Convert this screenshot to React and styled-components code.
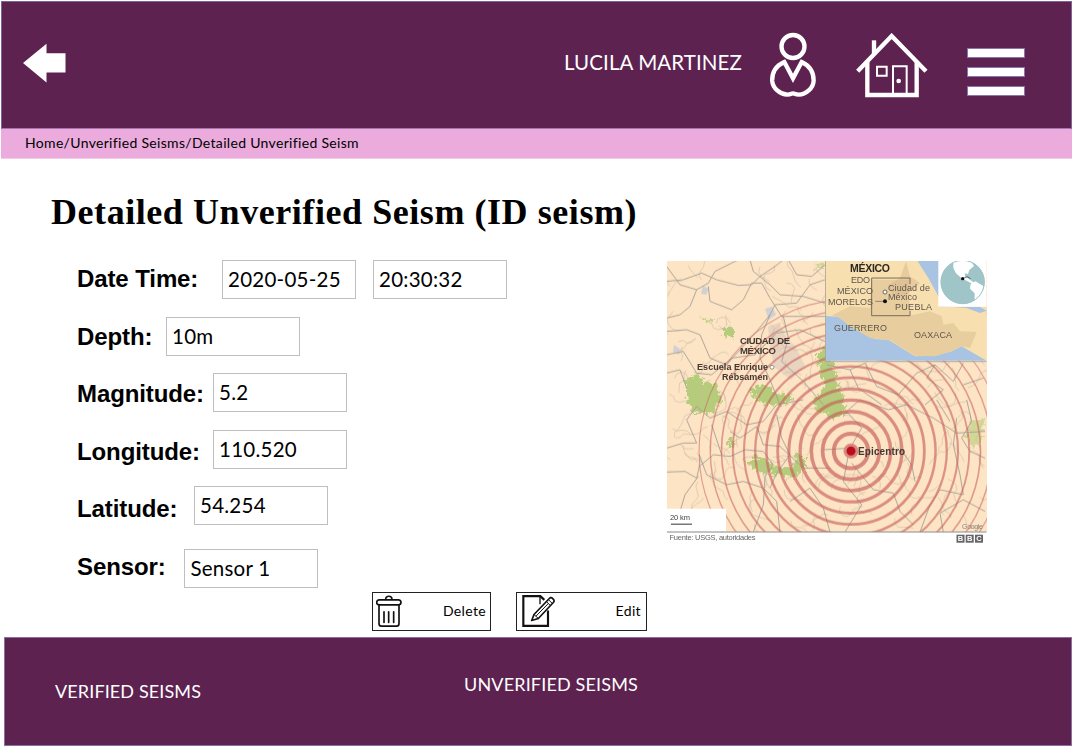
import React from "react";
import styled, { createGlobalStyle } from "styled-components";

const GlobalStyle = createGlobalStyle`
  *, *::before, *::after { box-sizing: border-box; }
  body { margin: 0; background: #fff; color: #000; font-family: Lato, "Liberation Sans", sans-serif; }
  svg { display: block; flex: none; }
`;

const Page = styled.div`
  width: 1073px;
  height: 747px;
  padding: 1px 1px 1px;
  display: flex;
  flex-direction: column;
  overflow: hidden;
`;

const Header = styled.header`
  height: 128px;
  flex: none;
  display: flex;
  align-items: flex-start;
  background: #5d2250;
  border: 1px solid #7d6499;
  border-bottom-color: #a774ae;
`;

const IconButton = styled.button`
  border: 0;
  padding: 0;
  background: none;
  flex: none;
  margin: ${(p) => p.$top}px 0 0 ${(p) => p.$left}px;
`;

const UserName = styled.span`
  margin: 47px 0 0 auto;
  width: 178px;
  font-size: 20.5px;
  line-height: 26px;
  letter-spacing: ${(p) => p.$spacing}px;
  color: #fff;
  white-space: nowrap;
`;

const MenuButton = styled.button`
  width: 58px;
  margin: 46px 46px 0 39px;
  padding: 0;
  border: 0;
  background: none;
  display: flex;
  flex-direction: column;
  gap: 9px;
`;

const MenuBar = styled.span`
  height: 10px;
  background: #fff;
  border: 1px solid #8b74ab;
`;

const Breadcrumb = styled.nav`
  height: 30px;
  flex: none;
  padding-left: 24px;
  background: #ebabdd;
  border-bottom: 1px solid #f1cbe8;
  font-size: 14px;
  line-height: 28px;
  letter-spacing: 0.32px;
  white-space: nowrap;
`;

const Main = styled.main`
  flex: 1;
  min-height: 0;
  display: flex;
  flex-direction: column;
`;

const Title = styled.h1`
  margin: 32px 0 0 50px;
  font: bold 36px/42px "Liberation Serif", serif;
  letter-spacing: 0.56px;
  white-space: nowrap;
`;

const Content = styled.div`
  display: flex;
  height: 332px;
  margin-top: 27px;
  padding-left: 76px;
`;

const Fields = styled.div`
  width: 590px;
  flex: none;
`;

const MapFrame = styled.figure`
  margin: 1px 0 0;
`;

const Row = styled.div`
  height: 57.6px;
  display: flex;
  align-items: flex-start;
`;

const Label = styled.label`
  width: ${(p) => p.$width}px;
  flex: none;
  padding-top: 5px;
  font: bold 24px/28px "Liberation Sans", sans-serif;
  letter-spacing: -0.1px;
  white-space: nowrap;
`;

const Value = styled.div`
  width: 133.500px;
  height: 39px;
  flex: none;
  margin-top: ${(p) => p.$shift || 0}px;
  margin-right: 17.500px;
  padding-left: 5px;
  border: 1px solid #bfbfbf;
  font-size: 20.5px;
  line-height: 37px;
  letter-spacing: 0.25px;
  white-space: nowrap;
`;

const Actions = styled.div`
  display: flex;
  gap: 25px;
  padding-left: 371px;
`;

const ActionButton = styled.button`
  width: ${(p) => p.$width}px;
  height: 39px;
  display: flex;
  align-items: center;
  justify-content: space-between;
  padding: 0 ${(p) => p.$end}px 0 ${(p) => p.$inset}px;
  background: #fff;
  color: #000;
  border: 1px solid #222;
  font: 14px/18px Lato, sans-serif;
  letter-spacing: 0.35px;
`;

const ActionText = styled.span`
  padding-bottom: 2px;
`;

const Footer = styled.footer`
  height: 109px;
  flex: none;
  margin-left: 3px;
  display: flex;
  background: #5d2250;
  border: 1px solid #8b6f9f;
  color: #fff;
  font-size: 18px;
  line-height: 22px;
`;

const FooterLink = styled.span`
  margin-left: ${(p) => p.$left}px;
  margin-top: ${(p) => p.$top}px;
  width: ${(p) => p.$width}px;
  letter-spacing: ${(p) => p.$spacing}px;
  white-space: nowrap;
`;

const BackIcon = () => (
  <svg width="44" height="40" viewBox="0.5 0 44 40">
    <path d="M.5 20 24 .8V10.300H43V29.500H24V39.500Z" fill="#fff" />
  </svg>
);

const UserIcon = () => (
  <svg width="50" height="66" viewBox="654 96 150 198" fill="none" stroke="#fff" strokeWidth="13">
    <circle cx="729" cy="139.500" r="34.500" />
    <path d="M703 186C676 198 666 219 666.500 242C668 265 690 283 712 284C723 284 724 280 729 280C734 280 735 284 746 284C768 283 790 265 791 242C791 219 781 198 755 186L729 235Z" />
  </svg>
);

const HomeIcon = () => (
  <svg width="72" height="66" viewBox="917 98 216 198" fill="none" stroke="#fff">
    <path d="M922 213 1024 107 1127 213" strokeWidth="13" />
    <path d="M971 162V120" strokeWidth="13" />
    <path d="M951 184V284H1099V184" strokeWidth="13" />
    <path d="M980 199H1009V226H980Z" strokeWidth="6" />
    <path d="M1028 281V198H1069V281" strokeWidth="6" />
    <circle cx="1045" cy="242" r="7" fill="#fff" stroke="none" />
  </svg>
);

const TrashIcon = () => (
  <svg width="26" height="33" viewBox="33 45 78 98" fill="none" stroke="#111" strokeWidth="5" strokeLinejoin="round" strokeLinecap="round">
    <path d="M62 58C61 45 81 45 81 58" />
    <path d="M42 59H101Q108 60 108 67Q108 73 101 74H42Q35 73 35 67Q35 60 42 59Z" />
    <path d="M42 75V130Q42 138 49 138H95Q102 138 102 130V75" />
    <path d="M57 95V127M71 95V127M86 95V127" />
  </svg>
);

const EditIcon = () => (
  <svg width="34" height="33" viewBox="470 45 102 98" fill="none" stroke="#111">
    <path d="M537 59 525 48H474V137H548V91" strokeWidth="6.500" />
    <path d="M524 50V72" strokeWidth="4" />
    <path d="M506 103 552 55Q557 50 563 56Q569 62 564 67L519 115L499 121Z" fill="#fff" strokeWidth="5" strokeLinejoin="round" />
    <path d="M506 103 519 115M543 64 555 76M549 58 561 70M512 108 549 70" strokeWidth="3" />
  </svg>
);

const makeRandom = (seed) => () => {
  seed = (seed * 16807) % 2147483647;
  return seed / 2147483647;
};

/* Minor roads: short wandering lines scattered over the map area. */
const random = makeRandom(481);
const minorRoads = Array.from({ length: 190 }, () => {
  let x = random() * 320;
  let y = random() * 270;
  let angle = random() * 6.28;
  let d = `M${x.toFixed(1)} ${y.toFixed(1)}`;
  const steps = 3 + Math.floor(random() * 6);
  for (let i = 0; i < steps; i += 1) {
    angle += (random() - 0.5) * 2;
    x += Math.cos(angle) * 5;
    y += Math.sin(angle) * 5;
    d += `L${x.toFixed(1)} ${y.toFixed(1)}`;
  }
  return d;
}).join("");

const rings = Array.from({ length: 13 }, (_, i) => ({
  r: 17.2 + i * 11.23,
  width: 4 - i * 0.24,
  opacity: 0.68 - i * 0.012,
}));

const THIRD = 1 / 3;
const quarter = (x, y) => `translate(${x} ${y}) scale(${THIRD})`;

const SeismMap = () => (
  <svg width="320" height="284" viewBox="0 0.3 320 284" fontFamily="Liberation Sans, sans-serif">
    <defs>
      <clipPath id="land"><rect width="319.500" height="271" /></clipPath>
      <clipPath id="inset"><rect x="158.500" width="161" height="100" /></clipPath>
      <clipPath id="globe"><circle cx="428" cy="82" r="66" /></clipPath>
      <filter id="soft" x="0" y="0" width="100%" height="100%"><feGaussianBlur stdDeviation="0.45" /></filter>
      <filter id="ragged"><feTurbulence baseFrequency="0.15" numOctaves="3" seed="4" /><feDisplacementMap in="SourceGraphic" scale="12" xChannelSelector="R" yChannelSelector="G" /></filter>
    </defs>
    <g clipPath="url(#land)">
      <g filter="url(#soft)">
        <rect width="320" height="271" fill="#fce4c4" />
        <g fill="#b5cd7a" filter="url(#ragged)">
          <path d="M15 116 29 108 35 120 46 120 51 138 43 150 22 150 17 137Z" />
          <path d="M54 65H64V74H54Z" />
          <path d="M31 55H43V58H31Z" opacity=".7" />
          <path d="M78 127 95 121 107 130 125 132 118 140 98 142 90 138Z" />
          <path d="M146 89 159 82 169 123 178 151 160 155 143 137 155 125Z" />
          <path d="M58 177H65V184H58Z" />
          <path d="M76 198 92 193 103 202 120 205 129 190H136V206L122 214 98 210 83 206Z" />
          <path d="M301 157 314 156 312 181 302 184 297 171Z" opacity=".6" />
          <path d="M144 136 156 132 158 149 149 151Z" />
          <path d="M146 1H154V6H146Z" opacity=".6" />
        </g>
        <g fill="#c3cbd8" opacity=".75">
          <path d="M98 48 105 46 109 54 102 59Z" />
          <path d="M7 84 14 89 12 94 6 91Z" />
          <path d="M36 25 42 28 39 34 34 33Z" />
        </g>
        <path d="M101 66 112 62 120 78 128 85 138 105 124 119 107 106 103 86Z" fill="#d6c3bb" opacity=".5" />
        <path d={minorRoads} fill="none" stroke="#cdb9a6" strokeWidth=".8" opacity=".7" />
        <g fill="none" stroke="#a39b94" strokeWidth="2.600" strokeLinejoin="round">
          <g transform={quarter(-7, -6)}>
            <path d="M20 80 70 75 125 55 170 75 235 92 275 90 300 65 345 35 370 15M20 35 60 90 110 105 145 85 165 50 235 15M110 105 90 155 60 180 20 190M145 95 150 140 215 165 250 135 275 85 305 85 330 130 365 185 430 185 495 185M270 15 280 50 330 90 360 120 430 125 495 145M20 230 80 225 120 240 150 310 200 330 240 285 290 230 330 180 345 150 410 145 450 90 495 75M330 180 305 240 300 310 330 375 360 450M370 185 385 250 365 320 430 380 490 450M20 300 70 290 110 355 155 360 215 310 285 300 350 235 420 225 495 260M385 15 410 60 455 65 495 30M20 355 60 345 80 400" />
          </g>
          <g transform={quarter(-7, 134)}>
            <path d="M20 160 70 145 110 145 80 75 110 35 150 70 200 50 260 90 310 80 350 30 430 15M20 232 75 230 110 250 118 215 160 180 210 185 255 165 310 170 340 210 315 245 310 330 280 412M118 180 140 240 200 270 250 260 310 280 350 320 360 412M70 412 60 350 75 300 115 245M185 180 155 90M210 110 240 130 290 95 310 150 360 155 430 220 510 220M350 60 365 130 390 180 350 235 330 280M390 320 450 280 490 340 510 412" />
          </g>
          <g transform={quarter(153, -6)}>
            <path d="M20 330 90 345 135 325 170 395 235 420 290 355 345 330 400 380 430 325M90 345 115 400 185 450M345 330 320 370 370 405 315 450M430 390 490 370" />
          </g>
          <g transform={quarter(153, 134)}>
            <path d="M10 165 90 160 125 100 80 50 120 15 205 45 260 30 340 70 410 115 495 110M85 180 70 260 125 330 75 412M95 205 160 285 220 295 240 350 280 390M240 160 275 210 285 260M410 70 400 150 420 240 430 300 360 285 330 330 300 412M440 15 455 80 425 130 450 170 495 190M495 350 430 315 360 355 370 412M350 15 390 80" />
          </g>
        </g>
        <g fill="none" stroke="#c75b58">
          {rings.map((ring) => (
            <circle key={ring.r} cx="184" cy="190.300" r={ring.r} strokeWidth={ring.width} opacity={ring.opacity} />
          ))}
        </g>
        <circle cx="184" cy="190.300" r="7.500" fill="#da8680" />
        <circle cx="184" cy="190.300" r="4.500" fill="#b9101c" />
      </g>
      <g clipPath="url(#inset)" filter="url(#soft)">
        <rect x="158" width="162" height="100.500" fill="#f8dfb0" />
        <g transform={quarter(153, -6)}>
          <path d="M15 184 55 186 100 220 165 253 205 255 285 305 345 303 395 290 425 275 500 318V325H15Z" fill="#a9c4e2" />
          <path d="M290 15H357V157H480L500 168 480 175 440 160 370 155 350 115 325 70Z" fill="#a9c4e2" />
          <path d="M36 182 90 155 150 160 155 75H268V183L330 170 365 185 370 210 400 205 420 230 470 232 450 280 425 275 395 290 345 305 285 303 210 257 150 250 90 215 55 188Z" fill="#e8cd9e" />
          <path d="M205 90 240 70 258 20 270 65 300 85 260 120 220 130Z" fill="#d2b48a" opacity=".45" />
          <path d="M155 70H270V88M270 168V183H155V70" fill="none" stroke="#776d5b" strokeWidth="3" />
          <path d="M166 140H193" stroke="#665f55" strokeWidth="2" />
          <circle cx="195" cy="112" r="6" fill="#fff" stroke="#666" strokeWidth="3" />
          <circle cx="195" cy="140" r="6" fill="#111" />
          <rect x="355" y="10" width="147" height="146" fill="#fff" />
          <circle cx="428" cy="82" r="66" fill="#9fc5c8" />
          <g clipPath="url(#globe)" fill="#fff">
            <path d="M400 18 452 18 462 34 448 46 444 58 434 56 436 66 448 74 462 84 458 88 424 70 408 56 400 40Z" />
            <path d="M452 88 466 80 490 94 486 122 470 146 464 140 464 116 450 102Z" />
          </g>
          <circle cx="428" cy="82" r="65" fill="none" stroke="#9fc5c8" strokeWidth="3" />
          <circle cx="428" cy="72" r="5" fill="#111" />
          <path d="M432 70 442 66 452 72" fill="none" stroke="#333" strokeWidth="2" />
        </g>
      </g>
      <path d="M158.500 0V101H320" fill="none" stroke="#a99f92" strokeWidth=".8" />
    </g>
    <g fontSize="9" fill="#5d554b">
      <text x="183" y="11.500" fontSize="10.500" fontWeight="bold" fill="#2b2723" textLength="40">MÉXICO</text>
      <text x="184" y="22.500" textLength="19">EDO</text>
      <text x="170" y="33" textLength="36">MÉXICO</text>
      <text x="161" y="44.500" textLength="45">MORELOS</text>
      <text x="221" y="30.800" textLength="42">Ciudad de</text>
      <text x="221" y="39" textLength="29">México</text>
      <text x="228" y="49" textLength="37">PUEBLA</text>
      <text x="167" y="70" textLength="53">GUERRERO</text>
      <text x="247" y="77" textLength="38">OAXACA</text>
    </g>
    <g fontWeight="bold" fontSize="9.500" fill="#443832">
      <text x="73" y="83" textLength="50">CIUDAD DE</text>
      <text x="73" y="93" textLength="36">MÉXICO</text>
      <text x="30" y="109.300" fontSize="9" textLength="71">Escuela Enrique</text>
      <text x="55" y="119" fontSize="9" textLength="46">Rébsamen</text>
      <text x="191" y="194" fontSize="10" textLength="47">Epicentro</text>
    </g>
    <circle cx="105" cy="106.500" r="2" fill="#fff" stroke="#777" strokeWidth=".8" />
    <rect x="0" y="248" width="59" height="23" fill="#fff" />
    <text x="3" y="259.500" fontSize="7.500" fill="#444" textLength="20">20 km</text>
    <path d="M4 263.500H25" stroke="#555" strokeWidth="1.200" />
    <text x="295" y="268" fontSize="7" fill="#8d8478" textLength="21">Google</text>
    <path d="M0 271.300H319.500" stroke="#8e8a86" strokeWidth="1" />
    <text x="2.500" y="279.500" fontSize="7.500" fill="#666" textLength="86">Fuente: USGS, autoridades</text>
    <g fill="#666">
      <rect x="289.500" y="274" width="8" height="8" />
      <rect x="298.700" y="274" width="8" height="8" />
      <rect x="308" y="274" width="8" height="8" />
    </g>
    <g fill="#fff" fontSize="7.500" fontWeight="bold" textAnchor="middle">
      <text x="293.500" y="280.700">B</text>
      <text x="302.700" y="280.700">B</text>
      <text x="312" y="280.700">C</text>
    </g>
  </svg>
);

const fields = [
  { label: "Date Time:", width: 145, shift: 0, values: ["2020-05-25", "20:30:32"] },
  { label: "Depth:", width: 89, shift: -1, values: ["10m"] },
  { label: "Magnitude:", width: 136, shift: -2, values: ["5.2"] },
  { label: "Longitude:", width: 136, shift: -3, values: ["110.520"] },
  { label: "Latitude:", width: 117, shift: -4, values: ["54.254"] },
  { label: "Sensor:", width: 107.4, shift: 1, values: ["Sensor 1"] },
];

export default function App() {
  return (
    <Page>
      <GlobalStyle />
      <Header>
        <IconButton $top={41} $left={21} aria-label="Back"><BackIcon /></IconButton>
        <UserName $spacing={0.1}>LUCILA MARTINEZ</UserName>
        <IconButton $top={30} $left={26} aria-label="Profile"><UserIcon /></IconButton>
        <IconButton $top={31} $left={38} aria-label="Home"><HomeIcon /></IconButton>
        <MenuButton aria-label="Menu"><MenuBar /><MenuBar /><MenuBar /></MenuButton>
      </Header>
      <Breadcrumb>Home/Unverified Seisms/Detailed Unverified Seism</Breadcrumb>
      <Main>
        <Title>Detailed Unverified Seism (ID seism)</Title>
        <Content>
          <Fields>
            {fields.map((field) => (
              <Row key={field.label}>
                <Label $width={field.width}>{field.label}</Label>
                {field.values.map((value) => (
                  <Value key={value} $shift={field.shift}>{value}</Value>
                ))}
              </Row>
            ))}
          </Fields>
          <MapFrame><SeismMap /></MapFrame>
        </Content>
        <Actions>
          <ActionButton $width={119} $inset={3} $end={4}><TrashIcon /><ActionText>Delete</ActionText></ActionButton>
          <ActionButton $width={131} $inset={5} $end={5}><EditIcon /><ActionText>Edit</ActionText></ActionButton>
        </Actions>
      </Main>
      <Footer>
        <FooterLink $left={50} $top={42} $width={409} $spacing={0.12}>VERIFIED SEISMS</FooterLink>
        <FooterLink $left={0} $top={35} $width={200} $spacing={0.16}>UNVERIFIED SEISMS</FooterLink>
      </Footer>
    </Page>
  );
}
